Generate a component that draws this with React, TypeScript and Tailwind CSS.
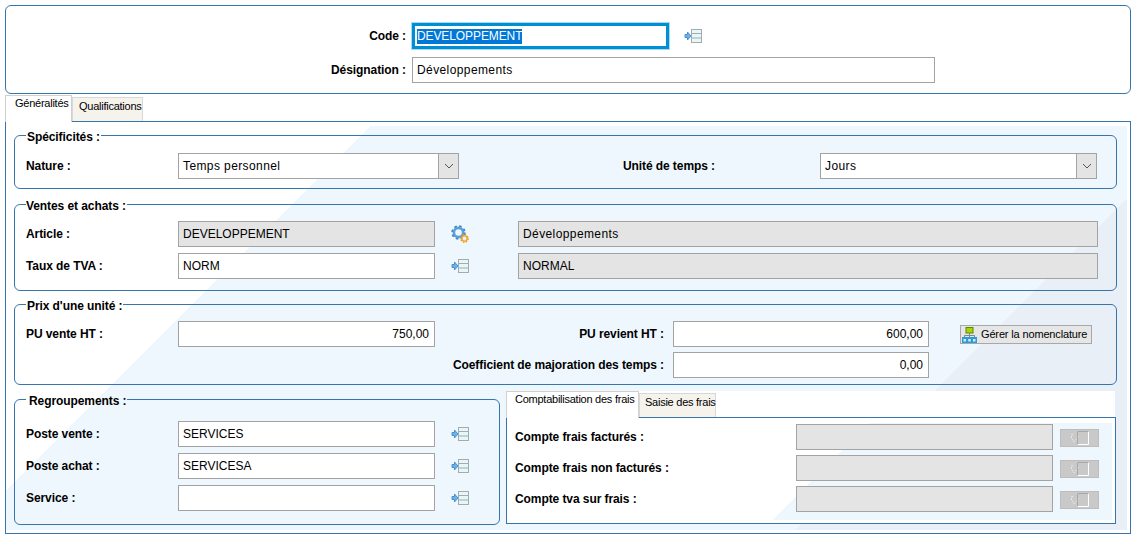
import React from 'react';

function LookupIcon() {
  return (
    <svg width="18" height="14" viewBox="0 0 18 14" className="shrink-0">
      <path d="M1 5.5H3.5V3L7 7L3.5 11V8.5H1Z" fill="#6cb2e4" stroke="#4a90d0" strokeWidth="1" />
      <rect x="7.5" y="0.5" width="10" height="13" fill="#e6f7f7" stroke="#a3abae" />
      <path d="M8 4.5H17M8 9H17" stroke="#a3abae" />
    </svg>
  );
}

function GearIcon() {
  return (
    <svg width="18" height="18" viewBox="0 0 18 18" className="shrink-0">
      <circle cx="7.5" cy="7.5" r="6" fill="none" stroke="#3f86c8" strokeWidth="2.4" strokeDasharray="2.4 2.3" />
      <circle cx="7.5" cy="7.5" r="4.6" fill="none" stroke="#5a9fd8" strokeWidth="2.6" />
      <circle cx="7.5" cy="7.5" r="2.2" fill="#eff7fe" />
      <circle cx="13.5" cy="13.5" r="3.6" fill="none" stroke="#ee9a1e" strokeWidth="1.6" strokeDasharray="1.5 1.3" />
      <circle cx="13.5" cy="13.5" r="2.6" fill="#eff7fe" stroke="#f0a526" strokeWidth="1.4" />
    </svg>
  );
}

function TreeIcon() {
  return (
    <svg width="15" height="16" viewBox="0 0 15 16" className="shrink-0">
      <rect x="4" y="0.5" width="7" height="5.5" fill="#a8d400" stroke="#5c8a00" />
      <path d="M7.5 6V10M2.5 10V8.5H12.5V10" fill="none" stroke="#7a8a8a" />
      <rect x="0" y="10" width="15" height="6" fill="#2f9ad8" />
      <path d="M1.5 12H4V14.5H1.5ZM6.2 12H8.8V14.5H6.2ZM11 12H13.5V14.5H11Z" fill="#cfeaf8" />
    </svg>
  );
}

function DisabledCheck({ className }: { className: string }) {
  return (
    <div className={`${className} ml-[7px] w-[39px] h-[18px] shrink-0 bg-[#c9c9c9] border border-[#bdbdbd] flex items-center justify-center`}>
      <svg width="20" height="14" viewBox="0 0 20 14">
        <path d="M3 3.5H1.5V7L4 11L9 5" fill="none" stroke="#e8e8e8" strokeWidth="1" strokeDasharray="2 1" />
        <path d="M7.5 13.5V0.5H18.5V13.5H7.5" fill="none" stroke="#ffffff" />
        <path d="M7.5 13.5V0.5H18.5" fill="none" stroke="#a8a8a8" />
      </svg>
    </div>
  );
}

function Field({ value = '', width, gray, right, loose }: { value?: string; width: string; gray?: boolean; right?: boolean; loose?: boolean }) {
  return (
    <input
      readOnly
      value={value}
      className={`${width} h-[26px] shrink-0 border border-[#a3a3a3] px-[4px] text-[12px] text-black outline-none ${gray ? 'bg-[#e4e4e4]' : 'bg-white'} ${right ? 'text-right pr-[5px]' : ''} ${loose ? 'tracking-[0.4px]' : ''}`}
    />
  );
}

function Select({ value, width }: { value: string; width: string }) {
  return (
    <div className={`${width} h-[26px] shrink-0 border border-[#a3a3a3] bg-white flex`}>
      <span className="flex-1 px-[4px] leading-[24px] text-[12px] tracking-[0.4px] text-black">{value}</span>
      <span className="w-[20px] bg-[#e4e4e4] border-l border-[#a3a3a3] flex items-center justify-center">
        <svg width="10" height="6" viewBox="0 0 10 6">
          <path d="M1 1L5 5L9 1" fill="none" stroke="#555555" />
        </svg>
      </span>
    </div>
  );
}

function Label({ children, className = 'w-[152px]' }: { children: React.ReactNode; className?: string }) {
  return <span className={`${className} shrink-0 font-bold text-[12px] leading-[15px] tracking-[-0.08px] text-black`}>{children}</span>;
}

function Group({ title, className, legendClass = 'px-[1px]', children }: { title: string; className: string; legendClass?: string; children: React.ReactNode }) {
  return (
    <fieldset className={`${className} border border-[#3776ad] rounded-[6px] pl-[11px]`}>
      <legend className={`${legendClass} pt-[4px] font-bold text-[12px] leading-[15px] tracking-[-0.08px] text-black`}>{title}</legend>
      {children}
    </fieldset>
  );
}

function LookupRow({ label, value }: { label: string; value: string }) {
  return (
    <div className="flex items-center">
      <Label>{label}</Label>
      <Field value={value} width="w-[257px]" />
      <span className="ml-[16px]"><LookupIcon /></span>
    </div>
  );
}

function AccountRow({ label, checkClass }: { label: string; checkClass: string }) {
  return (
    <div className="flex items-center">
      <Label className="w-[281px]">{label}</Label>
      <Field width="w-[257px]" gray />
      <DisabledCheck className={checkClass} />
    </div>
  );
}

export default function App() {
  return (
    <div className="w-[1136px] h-[548px] bg-white pt-[5px] pl-[5px] font-['Liberation_Sans',Arial,sans-serif] text-[12px] text-black overflow-hidden">
      <div className="w-[1126px] h-[89px] border border-[#3776ad] rounded-[6px] pt-[17px] flex flex-col gap-[8px]">
        <div className="flex items-center">
          <Label className="w-[400px] text-right">Code :</Label>
          <div className="ml-[6px] w-[257px] h-[26px] border-[3px] border-[#008fd5] outline outline-[#a9dcf3] pl-[2px] flex items-center">
            <span className="bg-[#0078d7] text-white text-[12px] leading-[15px] tracking-[-0.1px]">DEVELOPPEMENT</span>
          </div>
          <span className="ml-[15px]"><LookupIcon /></span>
        </div>
        <div className="flex items-center">
          <Label className="w-[400px] text-right">Désignation :</Label>
          <span className="ml-[6px]"><Field value="Développements" width="w-[523px]" loose /></span>
        </div>
      </div>

      <div className="flex items-end h-[26px] mt-[1px]">
        <div className="relative z-10 -mb-[1px] w-[67px] h-[27px] bg-white border border-b-0 border-[#d0d0d0] pl-[9px] pt-[1px] text-[11px] leading-[13px] tracking-[-0.25px]">Généralités</div>
        <div className="w-[71px] h-[24px] bg-[#f5f3ec] border border-b-0 border-[#d8d8d8] pl-[6px] pt-[2px] text-[11px] leading-[13px] tracking-[-0.25px]">Qualifications</div>
      </div>

      <div className="w-[1126px] h-[413px] border border-[#3776ad] pt-[5px] pr-[3px] pb-[2px]">
        <div className="h-full pl-[8px] bg-[linear-gradient(135deg,#ffffff_23.87%,#eff7fe_23.87%,#eff7fe_78.23%,#e8eff7_78.23%)]">
          <Group title="Spécificités :" className="w-[1103px] -mt-[1px] pt-[8px] pb-[9px]">
            <div className="flex items-center">
              <Label>Nature :</Label>
              <Select value="Temps personnel" width="w-[281px]" />
              <Label className="w-[256px] text-right">Unité de temps :</Label>
              <span className="ml-[105px]"><Select value="Jours" width="w-[277px]" /></span>
            </div>
          </Group>

          <Group title="Ventes et achats :" className="w-[1103px] mt-[6px] pt-[7px] pb-[11px]" legendClass="pr-[1px]">
            <div className="flex flex-col gap-[6px]">
              <div className="flex items-center">
                <Label>Article :</Label>
                <Field value="DEVELOPPEMENT" width="w-[257px]" gray />
                <span className="ml-[16px]"><GearIcon /></span>
                <span className="ml-[49px]"><Field value="Développements" width="w-[580px]" gray loose /></span>
              </div>
              <div className="flex items-center">
                <Label>Taux de TVA :</Label>
                <Field value="NORM" width="w-[257px]" />
                <span className="ml-[16px]"><LookupIcon /></span>
                <span className="ml-[49px]"><Field value="NORMAL" width="w-[580px]" gray /></span>
              </div>
            </div>
          </Group>

          <Group title="Prix d'une unité :" className="w-[1103px] mt-[4px] pt-[7px] pb-[6px]">
            <div className="flex flex-col gap-[5px]">
              <div className="flex items-center">
                <Label>PU vente HT :</Label>
                <Field value="750,00" width="w-[257px]" right />
                <Label className="w-[229px] text-right">PU revient HT :</Label>
                <span className="ml-[9px]"><Field value="600,00" width="w-[256px]" right /></span>
                <button className="ml-[31px] w-[132px] h-[19px] bg-[#e6e6e6] border border-[#a8a8a8] flex items-center pl-[1px] pt-[1px] gap-[4px] text-[11px] leading-[13px] tracking-[-0.15px] whitespace-nowrap">
                  <TreeIcon />
                  Gérer la nomenclature
                </button>
              </div>
              <div className="flex items-center">
                <Label className="w-[638px] text-right">Coefficient de majoration des temps :</Label>
                <span className="ml-[9px]"><Field value="0,00" width="w-[256px]" right /></span>
              </div>
            </div>
          </Group>

          <div className="flex items-start mt-[5px]">
            <Group title="Regroupements :" className="w-[486px] pt-[12px] pb-[13px]" legendClass="pl-[3px] pr-[1px]">
              <div className="flex flex-col gap-[6px]">
                <LookupRow label="Poste vente :" value="SERVICES" />
                <LookupRow label="Poste achat :" value="SERVICESA" />
                <LookupRow label="Service :" value="" />
              </div>
            </Group>

            <div className="ml-[6px] mt-[1px] w-[610px]">
              <div className="flex items-end h-[26px] w-[609px] bg-white">
                <div className="relative z-10 -mb-[1px] w-[133px] h-[27px] bg-white border border-b-0 border-[#d0d0d0] pl-[8px] pt-[1px] text-[11px] leading-[13px] tracking-[-0.25px] whitespace-nowrap">Comptabilisation des frais</div>
                <div className="w-[77px] h-[24px] bg-[#f5f3ec] border border-b-0 border-[#d8d8d8] pl-[5px] pt-[2px] text-[11px] leading-[13px] tracking-[-0.25px] whitespace-nowrap">Saisie des frais</div>
              </div>
              <div className="h-[107px] border border-[#3776ad] bg-white pt-[5px] pr-[3px] pb-[3px]">
                <div className="h-full pl-[8px] pt-[1px] flex flex-col gap-[5px] bg-[linear-gradient(135deg,#ffffff_51.6%,#eff7fe_51.6%)]">
                  <AccountRow label="Compte frais facturés :" checkClass="mt-[1px]" />
                  <AccountRow label="Compte frais non facturés :" checkClass="mt-[1px]" />
                  <AccountRow label="Compte tva sur frais :" checkClass="mt-[2px]" />
                </div>
              </div>
            </div>
          </div>
        </div>
      </div>
    </div>
  );
}
